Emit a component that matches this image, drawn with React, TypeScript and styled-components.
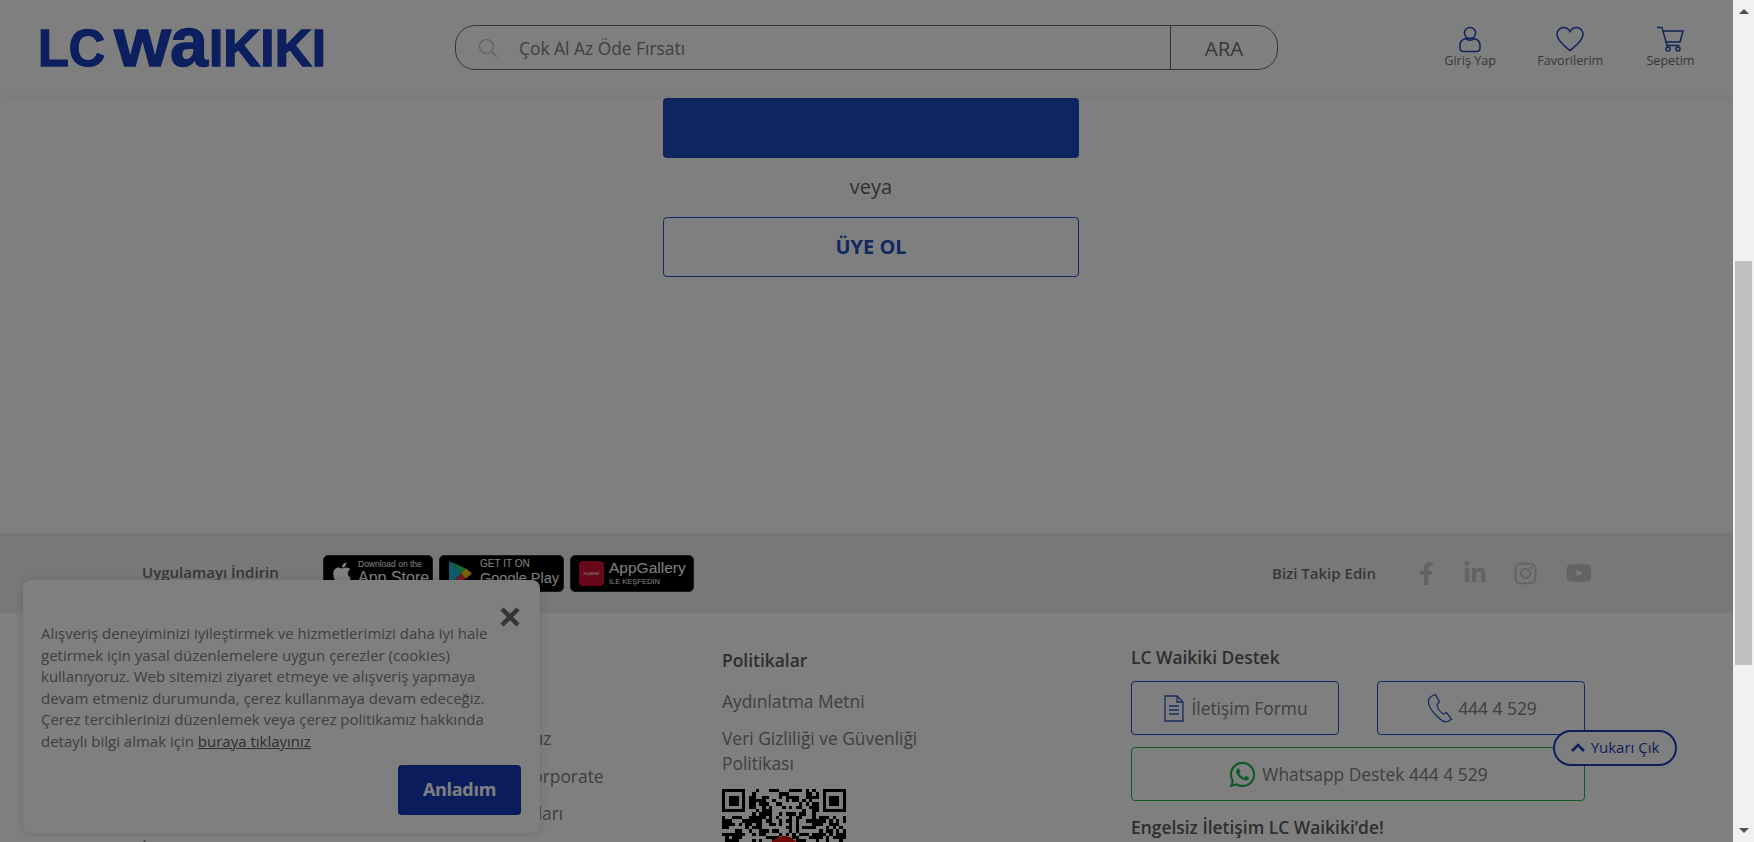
import React from "react";
import styled, { createGlobalStyle } from "styled-components";
import { FaApple, FaFacebookF, FaInstagram, FaLinkedinIn, FaWhatsapp, FaYoutube } from "react-icons/fa";

const Global = createGlobalStyle`
  html, body { margin: 0; padding: 0; height: 100%; overflow: hidden; background: #fff; }
  body { font-family: "Open Sans", "Noto Sans", "Liberation Sans", sans-serif; }
  * { box-sizing: border-box; }
`;

const Viewport = styled.div`display: flex; width: 100vw; height: 100vh; overflow: hidden;`;
const Page = styled.div`position: relative; flex: 1; min-width: 0; display: flex; flex-direction: column; overflow: hidden; background: #fff;`;
const Dim = styled.div`position: absolute; inset: 0; background: rgba(0,0,0,.5); z-index: 20;`;

const Scrollbar = styled.div`width: 21px; flex: none; background: #f1f1f1; display: flex; flex-direction: column; align-items: center; justify-content: space-between; padding: 9px 0;`;
const Track = styled.div`flex: 1; width: 100%; padding: 247px 2px 0;`;
const Thumb = styled.div`width: 17px; height: 404px; background: #c1c1c1;`;
const Arrow = styled.div<{ $down?: boolean }>`
  width: 0; height: 0; border-left: 5px solid transparent; border-right: 5px solid transparent;
  ${p => p.$down ? "border-top: 5px solid #505050;" : "border-bottom: 5px solid #505050;"}
`;

const Header = styled.header`height: 95px; flex: none; display: flex; align-items: center; padding-left: 40px; background: #fff; box-shadow: 0 2px 6px rgba(0,0,0,.05); position: relative; z-index: 2;`;
const LogoBox = styled.svg`width: 284px; height: 40px; flex: none; display: block; overflow: visible;`;
const SearchBar = styled.div`width: 823px; height: 45px; margin-left: 131px; display: flex; align-items: center; border: 1px solid #666; border-radius: 20px; flex: none;`;
const SearchIcon = styled.svg`width: 20px; height: 20px; margin-left: 22px; flex: none;`;
const SearchText = styled.span`flex: 1; margin-left: 21px; font-size: 17.4px; color: #808080;`;
const SearchButton = styled.span`width: 107px; height: 100%; display: flex; align-items: center; justify-content: center; border-left: 1px solid #666; font-size: 20.5px; color: #707070;`;
const Actions = styled.nav`display: flex; margin-left: 142px;`;
const Action = styled.a`width: 100.2px; display: flex; flex-direction: column; align-items: center; font-size: 12.6px; line-height: 16px; color: #707070; white-space: nowrap;`;
const ActionIcon = styled.svg`width: 30px; height: 27px; display: block; color: #2148b4;`;

const Main = styled.main`flex: none; height: 438px; padding: 3px 0 0 663px; background: #fff;`;
const Stack = styled.div`width: 416px; display: flex; flex-direction: column;`;
const PrimaryBlock = styled.div`height: 60px; background: #1c4ac0; border-radius: 4px;`;
const Or = styled.div`height: 59px; padding-bottom: 2px; display: flex; align-items: center; justify-content: center; font-size: 20px; color: #606060;`;
const OutlineButton = styled.a`height: 60px; padding-bottom: 2px; display: flex; align-items: center; justify-content: center; border: 1px solid #2450c0; border-radius: 4px; color: #2450c0; font-size: 20px; font-weight: 700;`;

const AppBand = styled.section`height: 80px; flex: none; display: flex; align-items: center; padding-left: 142px; background: #f1f1f1;`;
const BandLabel = styled.span`font-size: 15px; font-weight: 600; color: #6e6e6e; white-space: nowrap;`;
const StoreLabel = styled(BandLabel)`width: 181px; padding-bottom: 2px;`;
const Badges = styled.div`display: flex; gap: 6px;`;
const Badge = styled.div<{ $w: number; $gap: number; $left: number }>`width: ${p => p.$w}px; height: 37px; background: #000; border: 1px solid #333; border-radius: 5px; display: flex; align-items: center; gap: ${p => p.$gap}px; padding-left: ${p => p.$left}px; color: #fff; overflow: hidden;`;
const BadgeText = styled.div`display: flex; flex-direction: column; white-space: nowrap;`;
const BadgeSmall = styled.span<{ $size: number }>`font-size: ${p => p.$size}px; line-height: 10px; font-family: "Liberation Sans", sans-serif;`;
const BadgeBig = styled.span<{ $size: number }>`font-size: ${p => p.$size}px; line-height: 18px; font-family: "Liberation Sans", sans-serif;`;
const HuaweiBox = styled.span`width: 25px; height: 25px; border-radius: 4px; background: #d01030; font-size: 4px; display: flex; align-items: center; justify-content: center; flex: none; font-family: "Liberation Sans", sans-serif;`;
const Social = styled.div`display: flex; align-items: center; margin-left: 578px;`;
const SocialIcons = styled.div`
  display: flex; align-items: center; gap: 26px; margin-left: 39px; color: #c6c6c6;
  svg:first-child { margin-right: -1.4px; }
  svg:last-child { margin-left: 2px; }
`;

const Footer = styled.footer`flex: 1; display: grid; grid-template-columns: 293px 287px 409px 454px; padding-left: 142px; background: #fff; overflow: hidden;`;
const Column = styled.div<{ $top?: number }>`padding-top: ${p => p.$top ?? 35}px; display: flex; flex-direction: column;`;
const Title = styled.h4`margin: 0; font-size: 17.4px; line-height: 24px; font-weight: 600; color: #5c5c5c; white-space: nowrap;`;
const Links = styled.div<{ $gap: number }>`display: flex; flex-direction: column; gap: ${p => p.$gap}px; margin-top: 17px;`;
const LinkItem = styled.a`font-size: 17.4px; line-height: 25px; color: #808080; white-space: nowrap;`;
const Qr = styled.svg`width: 124px; height: 124px; margin-top: 13px; flex: none; display: block;`;
const SupportRow = styled.div`display: flex; gap: 38px; margin-top: 12px;`;
const SupportBox = styled.a<{ $green?: boolean; $wide?: boolean }>`
  width: ${p => p.$wide ? 454 : 208}px; height: 54px; flex: none; display: flex; align-items: center; justify-content: center; gap: 5px;
  border: 1px solid ${p => p.$green ? "#1eb050" : "#2450c0"}; border-radius: 4px; font-size: 17.4px; color: #808080;
  margin-top: ${p => p.$wide ? 12 : 0}px;
`;
const BoxIcon = styled.svg`width: 24px; height: 30px; color: #2e55bc; flex: none;`;
const PhoneIcon = styled(BoxIcon)`width: 28px;`;
const Engelsiz = styled(Title)`margin-top: 14px;`;

const Cookie = styled.aside`position: absolute; left: 23px; top: 580px; width: 517px; height: 253px; background: #fff; border-radius: 8px; box-shadow: 0 0 10px rgba(0,0,0,.15); padding: 43px 19px 0 18px; display: flex; flex-direction: column; z-index: 5;`;
const CookieText = styled.p`margin: 0; font-size: 15px; line-height: 21.6px; color: #808080; white-space: nowrap;`;
const CookieLink = styled.a`color: #606060; text-decoration: underline;`;
const Close = styled.svg`position: absolute; right: 20px; top: 27px; width: 20px; height: 20px; color: #6a6a6a;`;
const Accept = styled.button`align-self: flex-end; margin-top: 12px; width: 123px; height: 50px; padding: 0 0 2px; border: 0; border-radius: 4px; background: #1438b8; color: #fff; font: 700 18px "Open Sans", sans-serif; letter-spacing: -.3px;`;

const ToTop = styled.a`position: absolute; left: 1553px; top: 730px; width: 124px; height: 36px; padding-bottom: 2px; border: 2px solid #1c3cb4; border-radius: 18px; background: #fff; display: flex; align-items: center; justify-content: center; gap: 6px; color: #1c3cb4; font-size: 15px; font-weight: 500; white-space: nowrap; z-index: 6;`;

const makeQr = () => {
  const n = 37;
  let seed = 90217;
  const on: boolean[][] = [];
  for (let y = 0; y < n; y++) {
    on[y] = [];
    for (let x = 0; x < n; x++) {
      seed = (seed * 1103515245 + 12345) & 0x7fffffff;
      on[y][x] = ((seed >> 16) & 3) < 2;
    }
  }
  const finder = (ox: number, oy: number) => {
    for (let y = -1; y < 8; y++) for (let x = -1; x < 8; x++) {
      if (ox + x < 0 || oy + y < 0 || ox + x >= n || oy + y >= n) continue;
      const ring = x >= 0 && x <= 6 && y >= 0 && y <= 6 && (x === 0 || x === 6 || y === 0 || y === 6);
      const core = x >= 2 && x <= 4 && y >= 2 && y <= 4;
      on[oy + y][ox + x] = ring || core;
    }
  };
  finder(0, 0); finder(n - 7, 0); finder(0, n - 7);
  let d = "";
  on.forEach((row, y) => row.forEach((v, x) => { if (v) d += `M${x} ${y}h1v1h-1z`; }));
  return d;
};
const qrPath = makeQr();

const LOGO_FONT = '"Liberation Sans", Arial, sans-serif';

const Logo = () => (
  <LogoBox viewBox="0 0 284 40" aria-label="LC Waikiki">
    <g fill="#183ebc" stroke="#183ebc" strokeWidth="1.4" fontFamily={LOGO_FONT} fontWeight="700">
      <text x="-2" y="38" fontSize="52" textLength="67" lengthAdjust="spacingAndGlyphs">LC</text>
      <text x="74" y="38" fontSize="52" textLength="57" lengthAdjust="spacingAndGlyphs">W</text>
      <text x="130" y="38" fontSize="70" textLength="38" lengthAdjust="spacingAndGlyphs">a</text>
      <text x="169" y="38" fontSize="52" textLength="117" lengthAdjust="spacingAndGlyphs">IKIKI</text>
    </g>
  </LogoBox>
);

const PlayLogo = () => (
  <svg width="24" height="27" viewBox="0 0 24 27">
    <path d="M1 1v25l12-12.5z" fill="#1fb6e8" />
    <path d="M1 1l12 12.5 5-5z" fill="#2bd26e" />
    <path d="M1 26l12-12.5 5 5z" fill="#ee3c4a" />
    <path d="M18 8.5l6 5-6 5-5-5z" fill="#fcc419" />
  </svg>
);

export default function App() {
  return (
    <Viewport>
      <Global />
      <Page>
        <Header>
          <Logo />
          <SearchBar>
            <SearchIcon viewBox="0 0 20 20" fill="none" stroke="#ccc" strokeWidth="1.6">
              <circle cx="8.5" cy="8.5" r="7" />
              <path d="M13.5 13.5L19 19" />
            </SearchIcon>
            <SearchText>Çok Al Az Öde Fırsatı</SearchText>
            <SearchButton>ARA</SearchButton>
          </SearchBar>
          <Actions>
            <Action>
              <ActionIcon viewBox="0 0 30 27" fill="none" stroke="currentColor" strokeWidth="1.5">
                <circle cx="15" cy="7" r="5.6" />
                <path d="M10.5 12.5C7 13.5 5 16 5 19.5v2.5c0 2 1.5 3.5 3.5 3.5h13c2 0 3.5-1.5 3.5-3.5v-2.5c0-3.5-2-6-5.5-7-2.5 2.2-6.5 2.2-9 0z" />
              </ActionIcon>
              Giriş Yap
            </Action>
            <Action>
              <ActionIcon viewBox="0 0 30 27" fill="none" stroke="currentColor" strokeWidth="1.5">
                <path d="M15 24.5C11 21 2 15 2 8.5 2 4.5 5 1.5 8.5 1.5c2.8 0 5 1.5 6.5 4 1.5-2.5 3.7-4 6.5-4 3.5 0 6.5 3 6.5 7 0 6.5-9 12.5-13 16z" />
              </ActionIcon>
              Favorilerim
            </Action>
            <Action>
              <ActionIcon viewBox="0 0 30 27" fill="none" stroke="currentColor" strokeWidth="1.5">
                <path d="M2 1.5h5l5 18h12.5" />
                <path d="M7.5 5h20.500l-3 11H10.5" />
                <circle cx="13" cy="23" r="2" />
                <circle cx="23" cy="23" r="2" />
              </ActionIcon>
              Sepetim
            </Action>
          </Actions>
        </Header>
        <Main>
          <Stack>
            <PrimaryBlock />
            <Or>veya</Or>
            <OutlineButton>ÜYE OL</OutlineButton>
          </Stack>
        </Main>
        <AppBand>
          <StoreLabel>Uygulamayı İndirin</StoreLabel>
          <Badges>
            <Badge $w={110} $gap={4} $left={6}>
              <FaApple size={24} />
              <BadgeText><BadgeSmall $size={8.5}>Download on the</BadgeSmall><BadgeBig $size={16}>App Store</BadgeBig></BadgeText>
            </Badge>
            <Badge $w={125} $gap={8} $left={8}>
              <PlayLogo />
              <BadgeText><BadgeSmall $size={10}>GET IT ON</BadgeSmall><BadgeBig $size={14.5}>Google Play</BadgeBig></BadgeText>
            </Badge>
            <Badge $w={124} $gap={5} $left={8}>
              <HuaweiBox>HUAWEI</HuaweiBox>
              <BadgeText><BadgeBig $size={15.5}>AppGallery</BadgeBig><BadgeSmall $size={7.5}>İLE KEŞFEDİN</BadgeSmall></BadgeText>
            </Badge>
          </Badges>
          <Social>
            <BandLabel>Bizi Takip Edin</BandLabel>
            <SocialIcons>
              <FaFacebookF size={23} />
              <FaLinkedinIn size={24} />
              <FaInstagram size={25} />
              <FaYoutube size={26} />
            </SocialIcons>
          </Social>
        </AppBand>
        <Footer>
          <Column>
            <Title>Kurumsal</Title>
            <Links $gap={12.3}>
              <LinkItem>Hakkımızda</LinkItem>
              <LinkItem>Kariyer</LinkItem>
              <LinkItem>Basın</LinkItem>
              <LinkItem>Yatırımcı</LinkItem>
              <LinkItem>İnsan Kaynakları</LinkItem>
            </Links>
          </Column>
          <Column>
            <Title>Destek</Title>
            <Links $gap={12.3}>
              <LinkItem>Yardım</LinkItem>
              <LinkItem>Mağazalarımız</LinkItem>
              <LinkItem>LC Waikiki Corporate</LinkItem>
              <LinkItem>Sadakat Kartları</LinkItem>
            </Links>
          </Column>
          <Column>
            <Title>Politikalar</Title>
            <Links $gap={12}>
              <LinkItem>Aydınlatma Metni</LinkItem>
              <LinkItem>Veri Gizliliği ve Güvenliği<br />Politikası</LinkItem>
            </Links>
            <Qr viewBox="0 0 37 37" shapeRendering="crispEdges">
              <path d={qrPath} fill="#000" />
              <circle cx="18.5" cy="18.5" r="4.5" fill="#e01010" shapeRendering="auto" />
            </Qr>
          </Column>
          <Column $top={32}>
            <Title>LC Waikiki Destek</Title>
            <SupportRow>
              <SupportBox>
                <BoxIcon viewBox="0 0 24 30" fill="none" stroke="currentColor" strokeWidth="1.3">
                  <path d="M3 3h12l6 6v19H3z" />
                  <path d="M15 3v6h6M7 13h10M7 17h10M7 21h10" />
                </BoxIcon>
                İletişim Formu
              </SupportBox>
              <SupportBox>
                <PhoneIcon viewBox="0 0 28 30" fill="none" stroke="currentColor" strokeWidth="1.3">
                  <path d="M7 3l3.5-1.5 4 7.5-2.5 2.5c.5 4 3 7.5 6.5 9.5l3-1.5 5 6.5-3.5 2.5c-3 1-7-1-11-5.5C6.5 18.5 3 12 3.5 7.5 3.7 5.5 5 4 7 3z" />
                </PhoneIcon>
                444 4 529
              </SupportBox>
            </SupportRow>
            <SupportBox $green $wide>
              <FaWhatsapp size={29} color="#1cb24c" />
              Whatsapp Destek 444 4 529
            </SupportBox>
            <Engelsiz>Engelsiz İletişim LC Waikiki’de!</Engelsiz>
          </Column>
        </Footer>
        <Cookie>
          <Close viewBox="0 0 20 20" fill="none" stroke="currentColor" strokeWidth="4.5">
            <path d="M2 2l16 16M18 2L2 18" />
          </Close>
          <CookieText>
            Alışveriş deneyiminizi iyileştirmek ve hizmetlerimizi daha iyi hale<br />
            getirmek için yasal düzenlemelere uygun çerezler (cookies)<br />
            kullanıyoruz. Web sitemizi ziyaret etmeye ve alışveriş yapmaya<br />
            devam etmeniz durumunda, çerez kullanmaya devam edeceğiz.<br />
            Çerez tercihlerinizi düzenlemek veya çerez politikamız hakkında<br />
            detaylı bilgi almak için <CookieLink>buraya tıklayınız</CookieLink>
          </CookieText>
          <Accept>Anladım</Accept>
        </Cookie>
        <ToTop>
          <svg width="14" height="9" viewBox="0 0 14 9" fill="none" stroke="currentColor" strokeWidth="2.6"><path d="M1 8l6-6 6 6" /></svg>
          Yukarı Çık
        </ToTop>
        <Dim />
      </Page>
      <Scrollbar>
        <Arrow />
        <Track><Thumb /></Track>
        <Arrow $down />
      </Scrollbar>
    </Viewport>
  );
}
